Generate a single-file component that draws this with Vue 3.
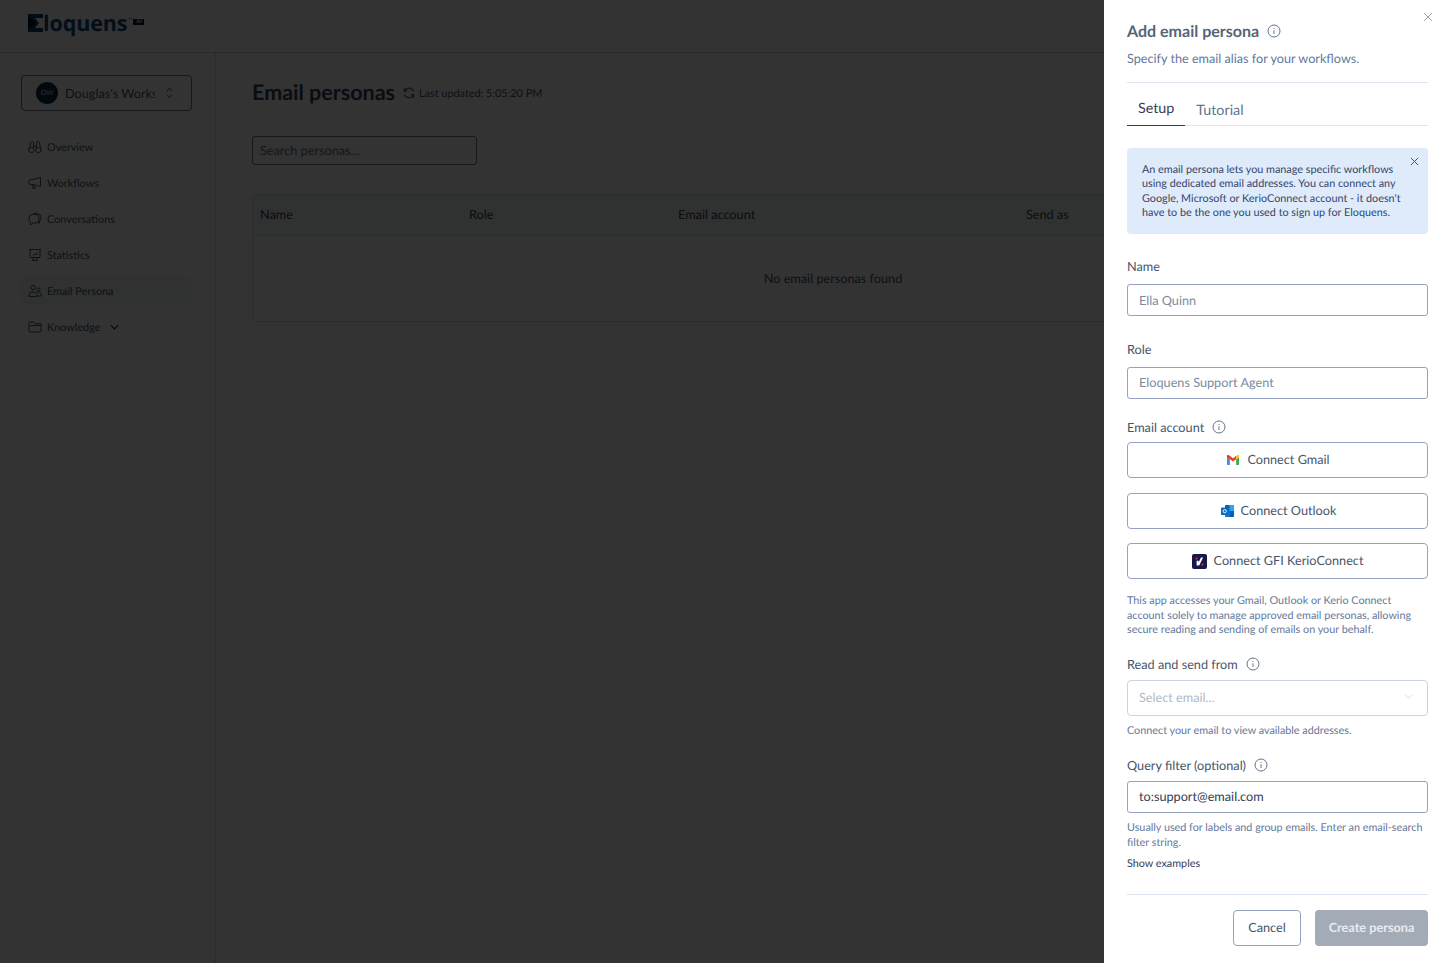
<script setup>
const nav = [
  { label: 'Overview', icon: 'bino' },
  { label: 'Workflows', icon: 'mega' },
  { label: 'Conversations', icon: 'chat' },
  { label: 'Statistics', icon: 'stat' },
  { label: 'Email Persona', icon: 'users', active: true },
  { label: 'Knowledge', icon: 'folder', caret: true },
]
</script>

<template>
  <div class="page">
    <header class="topbar">
      <div class="logo">
        <svg class="logo-mark" viewBox="0 0 15 18" width="15" height="18">
          <path d="M0 0H15V4H7L11 9L7 14H15V18H0Z" fill="#0b3f6b" />
          <path d="M0 2L8 9L0 16Z" fill="#04121f" />
        </svg>
        <span class="logo-text">loquens</span>
        <span class="logo-tm">™</span>
        <span class="logo-ai">AI</span>
      </div>
    </header>
    <div class="body">
      <aside class="sidebar">
        <div class="workspace">
          <span class="avatar">DW</span>
          <span class="ws-name">Douglas's Workspace</span>
          <svg class="ws-caret" viewBox="0 0 10 16" width="9" height="14" fill="none" stroke="#64748b" stroke-width="1.2">
            <path d="M2 6L5 2.5L8 6M2 10L5 13.5L8 10" />
          </svg>
        </div>
        <nav class="nav">
          <div v-for="item in nav" :key="item.label" class="nav-item" :class="{ active: item.active }">
            <svg class="nav-icon" viewBox="0 0 14 14" width="14" height="14" fill="none" stroke="#475569" stroke-width="1">
              <template v-if="item.icon === 'bino'">
                <circle cx="3.5" cy="10" r="2.7" /><circle cx="10.5" cy="10" r="2.7" />
                <path d="M1 9.5L2.8 2.5A1.3 1.3 0 0 1 5.5 3V9M13 9.5L11.2 2.5A1.3 1.3 0 0 0 8.5 3V9M5.5 6H8.5" />
              </template>
              <template v-else-if="item.icon === 'mega'">
                <path d="M12.5 1.5V10.5L5 8.5H2.5A1.5 1.5 0 0 1 1 7V5A1.5 1.5 0 0 1 2.5 3.5H5ZM4 8.5L5 12.5H7L6.3 9" />
              </template>
              <template v-else-if="item.icon === 'chat'">
                <path d="M5.5 1.5H9A4 4 0 0 1 13 5.5V6A4 4 0 0 1 11.5 9.2V11.2L9.8 10" />
                <path d="M4.8 2.5A3.8 3.8 0 0 0 1 6.3V7.5A3.6 3.6 0 0 0 2.5 10.5V13L5 11H7.5A3.5 3.5 0 0 0 11 7.5V6A3.5 3.5 0 0 0 7.5 2.5Z" />
              </template>
              <template v-else-if="item.icon === 'stat'">
                <path d="M1 1.5H13M2 1.5V9.5H12V1.5M5 9.5V12M9 9.5V12M4 12.5H10M5 7.5L7 6L8 7L9.5 4.5" />
              </template>
              <template v-else-if="item.icon === 'users'">
                <circle cx="5" cy="3.5" r="2.2" /><circle cx="10.5" cy="5.5" r="1.6" />
                <path d="M1 12.5V10.5A3 3 0 0 1 4 8H6A3 3 0 0 1 9 10.5V12.5ZM9.5 8.2H11A2.4 2.4 0 0 1 13.3 10.6V12H9.5" />
              </template>
              <template v-else>
                <path d="M1 3A1 1 0 0 1 2 2H5.5L7 3.7H12A1 1 0 0 1 13 4.7V11A1 1 0 0 1 12 12H2A1 1 0 0 1 1 11ZM1 5.5H13" />
              </template>
            </svg>
            <span class="nav-label">{{ item.label }}</span>
            <svg v-if="item.caret" class="nav-caret" viewBox="0 0 10 6" width="9" height="6" fill="none" stroke="#1e293b" stroke-width="1.3">
              <path d="M1 1L5 5L9 1" />
            </svg>
          </div>
        </nav>
      </aside>
      <main class="main">
        <div class="heading">
          <h1 class="title">Email personas</h1>
          <svg class="refresh" viewBox="0 0 14 14" width="12" height="12" fill="none" stroke="#475569" stroke-width="1.3">
            <path d="M12.5 5.5A5.7 5.7 0 0 0 2.7 3.3L1.5 4.8M1.5 8.5A5.7 5.7 0 0 0 11.3 10.7L12.5 9.2M1.5 1.5V4.8H4.8M12.5 12.5V9.2H9.2" />
          </svg>
          <span class="updated">Last updated: 5:05:20 PM</span>
        </div>
        <input class="search" placeholder="Search personas..." />
        <section class="table">
          <div class="thead">
            <span>Name</span><span>Role</span><span>Email account</span><span>Send as</span>
          </div>
          <div class="tempty">No email personas found</div>
        </section>
      </main>
    </div>

    <div class="overlay"></div>

    <aside class="drawer">
      <svg class="drawer-close" viewBox="0 0 10 10" width="10" height="10" fill="none" stroke="#94a3b8" stroke-width="1">
        <path d="M1 1L9 9M9 1L1 9" />
      </svg>
      <div class="d-title-row">
        <h2 class="d-title">Add email persona</h2>
        <svg class="info big" viewBox="0 0 14 14" fill="none" stroke="#64748b">
          <circle cx="7" cy="7" r="6" /><path d="M7 6.3V10M7 4V4.9" />
        </svg>
      </div>
      <p class="d-sub">Specify the email alias for your workflows.</p>
      <div class="rule first"></div>
      <div class="tabs">
        <span class="tab on">Setup</span>
        <span class="tab">Tutorial</span>
      </div>
      <div class="alert">
        <p>An email persona lets you manage specific workflows using dedicated email addresses. You can connect any Google, Microsoft or KerioConnect account - it doesn't have to be the one you used to sign up for Eloquens.</p>
        <svg class="alert-x" viewBox="0 0 10 10" width="9" height="9" fill="none" stroke="#475569" stroke-width="1.1">
          <path d="M1 1L9 9M9 1L1 9" />
        </svg>
      </div>

      <label class="label l-name">Name</label>
      <input class="field" placeholder="Ella Quinn" />
      <label class="label l-role">Role</label>
      <input class="field f-up" placeholder="Eloquens Support Agent" />
      <label class="label l-mail">Email account
        <svg class="info" viewBox="0 0 14 14" fill="none" stroke="#64748b">
          <circle cx="7" cy="7" r="6" /><path d="M7 6.3V10M7 4V4.9" />
        </svg>
      </label>
      <button class="connect b1">
        <svg viewBox="0 0 12 10" width="12" height="10">
          <path d="M0 1.2V9.2A.8.8 0 0 0 .8 10H2.8V4L0 2.4Z" fill="#4285f4" />
          <path d="M12 1.2V9.2A.8.8 0 0 1 11.2 10H9.2V4L12 2.4Z" fill="#34a853" />
          <path d="M2.8 .8L6 3.2L9.2 .8V4.2L6 6.6L2.8 4.2Z" fill="#ea4335" />
          <path d="M0 1.2A1 1 0 0 1 1.7 .3L2.8 1V4.3L0 2.4Z" fill="#d93025" />
          <path d="M12 1.2A1 1 0 0 0 10.3 .3L9.2 1V4.3L12 2.4Z" fill="#fbbc04" />
        </svg>
        Connect Gmail
      </button>
      <button class="connect b2">
        <svg viewBox="0 0 13 12" width="13" height="12">
          <rect x="4" y="0" width="9" height="12" rx=".8" fill="#0a5fb4" />
          <rect x="8.5" y="0" width="4.5" height="6" fill="#28a8ea" />
          <rect x="4" y="6" width="4.5" height="6" fill="#0f78d4" />
          <rect x="0" y="2.5" width="7.5" height="7.5" rx=".8" fill="#0f6cbd" />
          <circle cx="3.7" cy="6.2" r="1.6" fill="none" stroke="#fff" stroke-width=".9" />
        </svg>
        Connect Outlook
      </button>
      <button class="connect b3">
        <svg viewBox="0 0 15 15" width="15" height="15">
          <rect width="15" height="15" rx="2" fill="#14184a" />
          <path d="M4.6 6.8H6.6V8.6L8.9 3.6H11.1L7.2 11.4H4.6Z" fill="#fff" />
          <circle cx="4.5" cy="4.4" r="1" fill="#e5364a" />
          <circle cx="10.4" cy="10.6" r="1" fill="#e5364a" />
        </svg>
        Connect GFI KerioConnect
      </button>
      <p class="help h-note">This app accesses your Gmail, Outlook or Kerio Connect account solely to manage approved email personas, allowing secure reading and sending of emails on your behalf.</p>
      <label class="label l-read">Read and send from
        <svg class="info" viewBox="0 0 14 14" fill="none" stroke="#64748b">
          <circle cx="7" cy="7" r="6" /><path d="M7 6.3V10M7 4V4.9" />
        </svg>
      </label>
      <div class="select">
        <span>Select email...</span>
        <svg viewBox="0 0 10 6" width="9" height="5" fill="none" stroke="#cbd5e1" stroke-width="1">
          <path d="M1 1L5 5L9 1" />
        </svg>
      </div>
      <p class="help h-conn">Connect your email to view available addresses.</p>
      <label class="label l-query">Query filter (optional)
        <svg class="info" viewBox="0 0 14 14" fill="none" stroke="#64748b">
          <circle cx="7" cy="7" r="6" /><path d="M7 6.3V10M7 4V4.9" />
        </svg>
      </label>
      <input class="field f-up" value="to:support@email.com" />
      <p class="help h-query">Usually used for labels and group emails. Enter an email-search filter string.</p>
      <a class="examples">Show examples</a>
      <div class="rule last"></div>
      <div class="actions">
        <button class="btn-cancel">Cancel</button>
        <button class="btn-create">Create persona</button>
      </div>
    </aside>
  </div>
</template>

<style scoped>
.page {
  position: relative;
  width: 1441px;
  height: 963px;
  overflow: hidden;
  background: #fff;
  font-family: Lato, "Open Sans", sans-serif;
  text-rendering: geometricPrecision;
  color: #334155;
}
input, button { text-rendering: geometricPrecision; }
.topbar {
  height: 53px;
  box-sizing: border-box;
  border-bottom: 1px solid #d5dbe4;
  padding: 14px 0 0 28px;
}
.logo { display: flex; align-items: flex-start; }
.logo-mark { flex: none; }
.logo-text {
  font-family: "Open Sans", sans-serif;
  font-weight: 700;
  font-size: 21.5px;
  line-height: 20px;
  color: #0b4a7d;
  letter-spacing: -0.1px;
}
.logo-tm { font: 5px/6px "Liberation Sans", sans-serif; color: #475569; margin-top: 3px; width: 6px; }
.logo-ai {
  margin: 5px 0 0 0;
  width: 11px;
  height: 6px;
  background: #0f172a;
  color: #e2e8f0;
  font: 700 5.5px/6px "Liberation Sans", sans-serif;
  text-align: center;
}
.body { display: flex; height: 910px; }
.sidebar {
  width: 216px;
  flex: none;
  box-sizing: border-box;
  border-right: 1px solid #d5dbe4;
  padding: 22px 23px 0 21px;
}
.workspace {
  height: 36px;
  box-sizing: border-box;
  border: 1px solid #64748b;
  border-radius: 4px;
  display: flex;
  align-items: center;
  padding: 0 16px 0 14px;
}
.avatar {
  width: 22px;
  height: 22px;
  flex: none;
  border-radius: 50%;
  background: #082f49;
  color: #cbd5e1;
  font-size: 7px;
  line-height: 22px;
  text-align: center;
}
.ws-name {
  margin-left: 7px;
  width: 90px;
  overflow: hidden;
  white-space: nowrap;
  font-size: 12.7px;
  line-height: 16px;
  margin-top: -1px;
  color: #475569;
}
.ws-caret { margin-left: 10px; flex: none; }
.nav { margin-top: 22px; display: flex; flex-direction: column; gap: 8px; }
.nav-item {
  height: 28px;
  display: flex;
  align-items: center;
  padding-left: 7px;
  border-radius: 4px;
  font-size: 10.85px;
  color: #475569;
}
.nav-item.active { background: #f0f7f4; }
.nav-icon { flex: none; margin-right: 5px; }
.nav-caret { margin-left: 10px; }
.main { flex: 1; padding: 0 27px 0 36px; min-width: 0; }
.heading { display: flex; align-items: center; height: 26px; margin-top: 26px; }
.title { margin: 0; font-size: 21.5px; font-weight: 700; color: #334155; line-height: 26px; }
.refresh { margin-left: 8px; margin-top: 2px; }
.updated { margin-left: 4px; margin-top: 2px; font-size: 10.85px; color: #475569; }
.search {
  display: block;
  width: 225px;
  height: 29px;
  box-sizing: border-box;
  margin-top: 31px;
  border: 1px solid #64748b;
  border-radius: 3px;
  padding: 0 7px 2px;
  font: 12.7px Lato, sans-serif;
  outline: none;
}
.search::placeholder { color: #64748b; }
.table {
  margin-top: 29px;
  height: 128px;
  border: 1px solid #d5dbe4;
  border-radius: 4px;
  box-sizing: border-box;
}
.thead {
  height: 41px;
  display: grid;
  grid-template-columns: 209px 209px 348px 1fr;
  align-items: center;
  padding: 0 0 3px 7px;
  box-sizing: border-box;
  background: #f0f7f4;
  border-bottom: 1px solid #d5dbe4;
  font-size: 12.7px;
  color: #334155;
}
.tempty {
  padding-top: 34px;
  text-align: center;
  font-size: 12.7px;
  color: #475569;
  line-height: 16px;
}
.overlay {
  position: absolute;
  inset: 0;
  background: rgba(0, 0, 0, 0.8);
}
.drawer {
  position: absolute;
  top: 0;
  right: 0;
  bottom: 0;
  width: 337px;
  box-sizing: border-box;
  padding: 0 13px 0 23px;
  background: #fff;
  overflow: hidden;
}
.drawer-close { position: absolute; top: 12px; right: 8px; }
.d-title-row { display: flex; align-items: center; height: 22px; margin-top: 21px; }
.d-title { margin: 0; font-size: 16.05px; font-weight: 700; color: #566478; line-height: 22px; }
.info { width: 14px; height: 14px; flex: none; }
.d-title-row .info { margin-left: 8px; margin-top: -3px; }
.d-sub { margin: 7px 0 0; font-size: 12.65px; line-height: 18px; color: #64789b; }
.rule { height: 1px; background: #dbe3ee; }
.rule.first { margin-top: 14px; }
.tabs {
  display: flex;
  height: 43px;
  box-sizing: border-box;
  border-bottom: 1px solid #dbe3ee;
  align-items: flex-end;
}
.tab {
  font-size: 14.3px;
  line-height: 18px;
  padding: 0 11px 5px;
  color: #64748b;
  margin-bottom: -1px;
  border-bottom: 1px solid transparent;
}
.tab.on { color: #334155; padding-bottom: 7px; border-bottom-color: #334155; }
.alert {
  position: relative;
  margin-top: 22px;
  height: 86px;
  box-sizing: border-box;
  border-radius: 4px;
  background: #dfebfb;
  padding: 15px 26px 0 15px;
}
.alert p { margin: 0; font-size: 10.8px; line-height: 14.4px; color: #33456a; }
.alert-x { position: absolute; top: 9px; right: 9px; }
.label {
  display: flex;
  align-items: center;
  gap: 8px;
  font-size: 12.7px;
  line-height: 16px;
  color: #475569;
}
.l-name { margin-top: 24px; }
.l-role { margin-top: 25px; }
.l-mail { margin-top: 20px; }
.l-read { margin-top: 18px; }
.l-query { margin-top: 19px; }
.field {
  display: block;
  width: 100%;
  height: 32px;
  box-sizing: border-box;
  margin-top: 10px;
  padding: 0 11px 1px;
  border: 1px solid #94a3c0;
  border-radius: 3px;
  font: 12.7px Lato, sans-serif;
  color: #334155;
  outline: none;
}
.field.f-up { padding-bottom: 3px; }
.field::placeholder { color: #7c8aa0; }
.l-query + .field { margin-top: 8px; }
.connect {
  display: flex;
  align-items: center;
  justify-content: center;
  gap: 7px;
  width: 100%;
  height: 36px;
  box-sizing: border-box;
  background: #fff;
  border: 1px solid #94a3c0;
  border-radius: 4px;
  font: 12.7px Lato, sans-serif;
  color: #475569;
  padding: 0 0 2px;
}
.connect svg { margin-top: 2px; }
.b1 { margin-top: 7px; gap: 8px; padding-left: 2px; }
.b2 { margin-top: 15px; padding-left: 2px; }
.b3 { margin-top: 14px; }
.help { margin: 0; font-size: 10.8px; line-height: 14.5px; color: #64789b; }
.h-note { margin-top: 15px; }
.select {
  margin-top: 8px;
  height: 36px;
  box-sizing: border-box;
  border: 1px solid #cbd5e1;
  border-radius: 4px;
  display: flex;
  align-items: center;
  justify-content: space-between;
  padding: 0 14px 2px 11px;
  font-size: 12.7px;
  color: #b0bac9;
}
.h-conn { margin-top: 8px; }
.h-query { margin-top: 8px; }
.examples { display: block; margin-top: 7px; font-size: 10.8px; line-height: 14px; color: #334155; }
.rule.last { margin-top: 23px; }
.actions { display: flex; justify-content: flex-end; gap: 14px; margin-top: 15px; }
.btn-cancel, .btn-create {
  height: 36px;
  box-sizing: border-box;
  border-radius: 4px;
  font: 12.7px Lato, sans-serif;
  padding: 0 0 2px;
}
.btn-cancel { width: 68px; background: #fff; border: 1px solid #94a3c0; color: #475569; }
.btn-create { width: 113px; background: #a3abb7; border: 0; color: #e8ebef; font-weight: 700; }
</style>
